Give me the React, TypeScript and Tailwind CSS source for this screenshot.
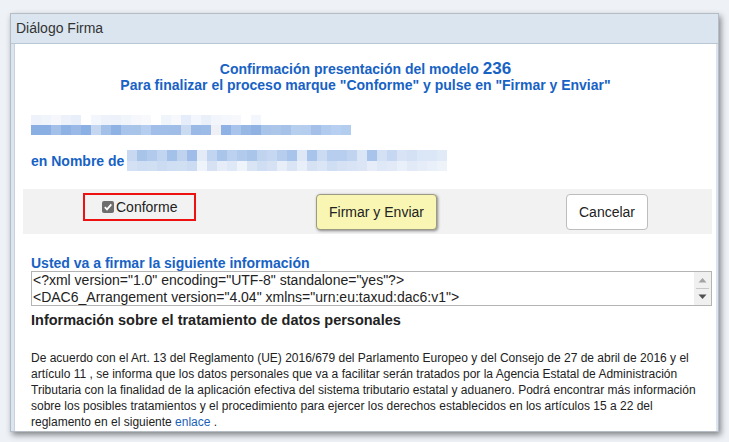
import React from "react";

const row1a = [
  "bg-[#eef3fb]", "bg-[#f0f4fb]", "bg-[#f5f7fc]", "bg-[#edf2fa]", "bg-[#e8effa]", "bg-[#ffffff]",
  "bg-[#f3f6fc]", "bg-[#eef3fb]", "bg-[#ecf1fa]", "bg-[#f0f4fb]", "bg-[#f5f7fc]", "bg-[#f8f9fd]",
  "bg-[#ffffff]", "bg-[#f0f4fb]", "bg-[#f6f8fc]", "bg-[#e4edf9]", "bg-[#f3f6fc]", "bg-[#eaf0fa]",
  "bg-[#f2f5fb]", "bg-[#f4f7fc]", "bg-[#f6f8fc]", "bg-[#ffffff]", "bg-[#f3f6fc]", "bg-[#ffffff]",
  "bg-[#ffffff]", "bg-[#ffffff]", "bg-[#ffffff]", "bg-[#ffffff]", "bg-[#ffffff]", "bg-[#ffffff]",
  "bg-[#ffffff]", "bg-[#ffffff]",
];
const row1b = [
  "bg-[#8aafe2]", "bg-[#8aafe2]", "bg-[#a3c0e8]", "bg-[#8db2e3]", "bg-[#9ab9e6]", "bg-[#8ab0e4]",
  "bg-[#c5d7f0]", "bg-[#a3c0e8]", "bg-[#8db2e3]", "bg-[#a8c4ea]", "bg-[#a9c4e9]", "bg-[#b5cdee]",
  "bg-[#a1bee8]", "bg-[#a1bee8]", "bg-[#9fbde7]", "bg-[#c9daf1]", "bg-[#9ab9e6]", "bg-[#9cbbe6]",
  "bg-[#eef0f6]", "bg-[#8db2e3]", "bg-[#a8c4ea]", "bg-[#97b7e5]", "bg-[#8fb2e3]", "bg-[#a9c4e9]",
  "bg-[#acc6ea]", "bg-[#a7c2e9]", "bg-[#b6cfef]", "bg-[#b5cdee]", "bg-[#a4c0e8]", "bg-[#b0cbee]",
  "bg-[#b7cff0]", "bg-[#b3cdef]",
];
const row2a = [
  "bg-[#c7d8f0]", "bg-[#a9c4e9]", "bg-[#b2cbed]", "bg-[#c1d4f0]", "bg-[#a4c1e9]", "bg-[#bfd3ef]",
  "bg-[#9fbde8]", "bg-[#e3ebf7]", "bg-[#c2d5f0]", "bg-[#a9c5ea]", "bg-[#bcd1ef]", "bg-[#b2cbed]",
  "bg-[#a9c5ea]", "bg-[#c0d4f0]", "bg-[#c6d8f1]", "bg-[#b6cdee]", "bg-[#a9c4ea]", "bg-[#dde7f6]",
  "bg-[#a9c4ea]", "bg-[#cadbf2]", "bg-[#b7ceef]", "bg-[#b7ceef]", "bg-[#c0d4f0]", "bg-[#dae5f6]",
  "bg-[#a9c4ea]", "bg-[#d4e1f5]", "bg-[#c5d7f1]", "bg-[#d8e4f5]", "bg-[#d4e1f5]", "bg-[#dbe6f6]",
  "bg-[#dbe6f6]", "bg-[#e1eaf7]",
];
const row2b = [
  "bg-[#d4e1f4]", "bg-[#cfdef3]", "bg-[#d1dff3]", "bg-[#cbdbf2]", "bg-[#d0def3]", "bg-[#d1dff3]",
  "bg-[#cbdbf2]", "bg-[#eff3fa]", "bg-[#d6e2f4]", "bg-[#e6edf8]", "bg-[#dfe8f6]", "bg-[#eff3fa]",
  "bg-[#d9e4f5]", "bg-[#cfdef3]", "bg-[#d6e2f4]", "bg-[#e8eef8]", "bg-[#d9e4f5]", "bg-[#e9eff9]",
  "bg-[#d6e2f4]", "bg-[#dae5f5]", "bg-[#d0def3]", "bg-[#d6e2f4]", "bg-[#d8e3f5]", "bg-[#dbe5f6]",
  "bg-[#e6edf8]", "bg-[#dfe8f6]", "bg-[#e3eaf7]", "bg-[#eaf0f9]", "bg-[#e2eaf7]", "bg-[#e6edf8]",
  "bg-[#eaf0f9]", "bg-[#eef3fa]",
];

function Blur({ top, bottom, rowH }: { top: string[]; bottom: string[]; rowH: string }) {
  return (
    <div className="flex flex-col">
      <div className={`flex ${rowH}`}>
        {top.map((c, i) => (
          <div key={i} className={`h-full w-[10px] ${c}`} />
        ))}
      </div>
      <div className={`flex ${rowH}`}>
        {bottom.map((c, i) => (
          <div key={i} className={`h-full w-[10px] ${c}`} />
        ))}
      </div>
    </div>
  );
}

export default function App() {
  const blue = "text-[#1762c4]";
  return (
    <div
      className="w-[729px] h-[442px] bg-[#eef2f7] pt-[13px] pl-[10px] overflow-hidden"
      style={{ fontFamily: '"Liberation Sans", Arial, sans-serif' }}
    >
      <div className="w-[709px] h-[419px] bg-[#dae5ef] border border-[#b5bcc4] shadow-[2px_3px_6px_rgba(0,0,0,0.45)] flex flex-col">
        <div className="h-[30px] flex items-center pl-[5px] text-[14px] text-[#333] border-b border-[#b9c7d4]">
          Diálogo Firma
        </div>
        <div className="flex-1 ml-[3px] mr-[2px] bg-white border-l border-[#c9d2dc] overflow-hidden">
          <div className={`pt-[17px] text-center font-bold text-[14px] leading-[16px] ${blue}`}>
            <div className="h-[16px]">
              Confirmación presentación del modelo <span className="text-[17px] leading-[16px]">236</span>
            </div>
            <div className="h-[16px]">Para finalizar el proceso marque "Conforme" y pulse en "Firmar y Enviar"</div>
          </div>

          <div className="mt-[22px] ml-[16px]">
            <Blur top={row1a} bottom={row1b} rowH="h-[10px]" />
          </div>

          <div className="mt-[15px] ml-[16px] flex items-center h-[21px]">
            <span className={`font-bold text-[14px] leading-[16px] ${blue}`}>en Nombre de</span>
            <div className="ml-[3px]">
              <Blur top={row2a} bottom={row2b} rowH="h-[10.5px]" />
            </div>
          </div>

          <div className="mt-[18px] ml-[8px] mr-[4px] h-[45px] bg-[#f2f2f2] flex items-start pt-[4px]">
            <div className="ml-[60px] w-[113px] h-[28px] border-2 border-[#ee1111] flex items-center pl-[17px]">
              <span className="w-[12px] h-[12px] rounded-[2px] bg-[#6e6e6e] flex items-center justify-center">
                <svg width="10" height="10" viewBox="0 0 10 10">
                  <path d="M1.8 5.2 L4 7.4 L8.3 2.4" stroke="white" strokeWidth="1.8" fill="none" />
                </svg>
              </span>
              <span className="ml-[2px] text-[14px] text-[#222]">Conforme</span>
            </div>
            <div className="ml-[120px] mt-[1px] w-[121px] h-[36px] bg-[#f8f6b2] border border-[#9a9a86] rounded-[4px] shadow-[1px_1px_3px_rgba(0,0,0,0.45)] flex items-center justify-center text-[14px] text-[#222]">
              Firmar y Enviar
            </div>
            <div className="ml-[129px] mt-[1px] w-[82px] h-[36px] bg-white border border-[#bdbdbd] rounded-[4px] flex items-center justify-center text-[14px] text-[#222]">
              Cancelar
            </div>
          </div>

          <div className={`mt-[21px] ml-[16px] font-bold text-[14px] leading-[16px] ${blue}`}>
            Usted va a firmar la siguiente información
          </div>
          <div className="ml-[16px] mr-[4px] h-[35px] border border-[#b4b4b4] flex">
            <div className="flex-1 pl-[1px] text-[14px] leading-[17px] text-[#222] overflow-hidden whitespace-nowrap">
              <div>{'<?xml version="1.0" encoding="UTF-8" standalone="yes"?>'}</div>
              <div>{'<DAC6_Arrangement version="4.04" xmlns="urn:eu:taxud:dac6:v1">'}</div>
            </div>
            <div className="w-[17px] bg-[#f0f0f0] flex flex-col items-center justify-between py-[5px]">
              <svg width="9" height="6" viewBox="0 0 9 6">
                <path d="M0.5 5.5 L4.5 1 L8.5 5.5 Z" fill="#a3a3a3" />
              </svg>
              <div className="w-[13px] h-px bg-[#c8c8c8]" />
              <svg width="9" height="6" viewBox="0 0 9 6">
                <path d="M0.5 0.5 L4.5 5 L8.5 0.5 Z" fill="#505050" />
              </svg>
            </div>
          </div>

          <div className="mt-[6px] ml-[16px] font-bold text-[14.5px] leading-[17px] text-[#222]">
            Información sobre el tratamiento de datos personales
          </div>

          <div className="mt-[21px] ml-[16px] mr-[8px] text-[12px] leading-[16px] text-[#222]">
            De acuerdo con el Art. 13 del Reglamento (UE) 2016/679 del Parlamento Europeo y del Consejo de 27 de abril de 2016 y el
            artículo 11 , se informa que los datos personales que va a facilitar serán tratados por la Agencia Estatal de Administración
            Tributaria con la finalidad de la aplicación efectiva del sistema tributario estatal y aduanero. Podrá encontrar más información
            sobre los posibles tratamientos y el procedimiento para ejercer los derechos establecidos en los artículos 15 a 22 del
            reglamento en el siguiente <span className="text-[#1a5fb8]">enlace</span>
            <span> .</span>
          </div>
        </div>
      </div>
    </div>
  );
}
